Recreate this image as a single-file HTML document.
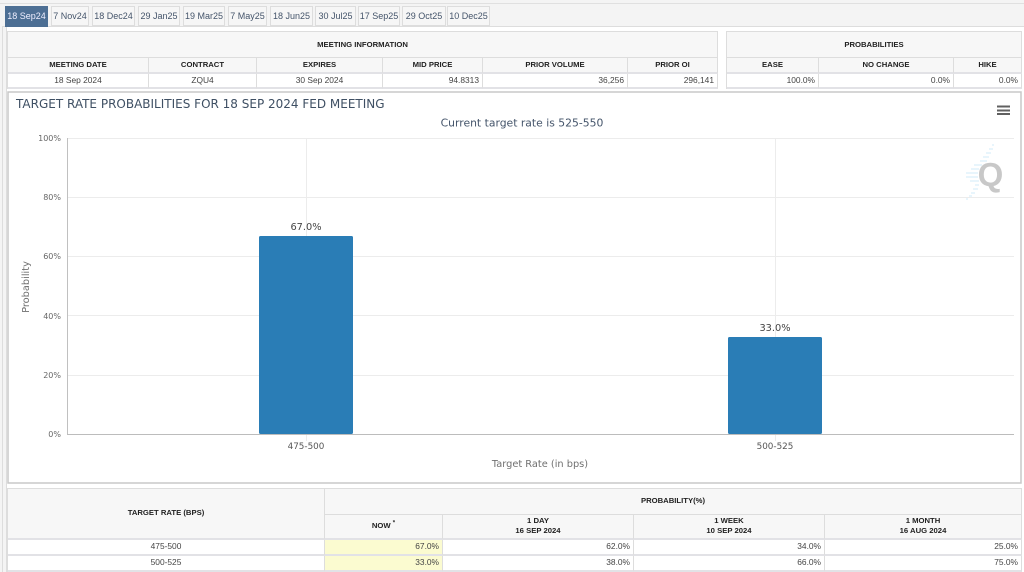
<!DOCTYPE html>
<html><head><meta charset="utf-8">
<style>
html,body{margin:0;padding:0}
body{width:1024px;height:572px;position:relative;overflow:hidden;background:#f4f4f4;font-family:"Liberation Sans",Arial,sans-serif;color:#333}
.a{position:absolute;box-sizing:border-box}
.tab{position:absolute;top:6px;height:20px;background:#f6f6f6;border:1px solid #ddd;color:#44546a;font-size:9px;line-height:19px;text-align:center;box-sizing:border-box;white-space:nowrap;overflow:hidden}
.tab.on{background:#4d6f94;border-color:#4d6f94;color:#eef;height:21px}
.t{position:absolute;box-sizing:border-box;font-size:8.400px;white-space:nowrap;overflow:hidden;text-align:center;color:#333}
.h{font-weight:bold;background:#f7f7f7;color:#222;border-right:1px solid #ddd;border-bottom:2px solid #e2e2e6;font-size:7.700px}
.d{background:#fff;border-right:1px solid #ddd;border-bottom:2px solid #e2e2e6;color:#444}
.r{text-align:right;padding-right:3px}
svg text{font-family:"DejaVu Sans",sans-serif}
</style></head><body>
<div class="a" style="left:0;top:3px;width:1024px;height:1px;background:#e0e0e0"></div>
<div class="a" style="left:2px;top:26px;width:1022px;height:546px;background:#fff;border-left:1px solid #ddd;border-top:1px solid #ddd"></div>
<div class="a" style="left:0;top:26px;width:2px;height:546px;background:#f4f4f4"></div>
<div class="a" style="left:3px;top:27px;width:4px;height:545px;background:#f4f4f4;border-right:1px solid #ddd"></div>

<div class="tab on" style="left:5px;width:43px">18 Sep24</div>
<div class="tab" style="left:51px;width:38px">7 Nov24</div>
<div class="tab" style="left:92px;width:43px">18 Dec24</div>
<div class="tab" style="left:138px;width:42px">29 Jan25</div>
<div class="tab" style="left:183px;width:42px">19 Mar25</div>
<div class="tab" style="left:228px;width:39px">7 May25</div>
<div class="tab" style="left:270px;width:43px">18 Jun25</div>
<div class="tab" style="left:315px;width:41px">30 Jul25</div>
<div class="tab" style="left:358px;width:42px">17 Sep25</div>
<div class="tab" style="left:402px;width:44px">29 Oct25</div>
<div class="tab" style="left:447px;width:43px">10 Dec25</div>

<!-- meeting info -->
<div class="a" style="left:7px;top:31px;width:711px;height:58px;border:1px solid #ddd;border-bottom:0"></div>
<div class="t h" style="left:8px;top:32px;width:710px;height:26px;line-height:25px;border-bottom:1px solid #ddd">MEETING INFORMATION</div>
<div class="t h" style="left:8px;top:58px;width:141px;height:16px;line-height:14px">MEETING DATE</div>
<div class="t h" style="left:149px;top:58px;width:108px;height:16px;line-height:14px">CONTRACT</div>
<div class="t h" style="left:257px;top:58px;width:126px;height:16px;line-height:14px">EXPIRES</div>
<div class="t h" style="left:383px;top:58px;width:100px;height:16px;line-height:14px">MID PRICE</div>
<div class="t h" style="left:483px;top:58px;width:145px;height:16px;line-height:14px">PRIOR VOLUME</div>
<div class="t h" style="left:628px;top:58px;width:90px;height:16px;line-height:14px">PRIOR OI</div>
<div class="t d" style="left:8px;top:74px;width:141px;height:15px;line-height:13px">18 Sep 2024</div>
<div class="t d" style="left:149px;top:74px;width:108px;height:15px;line-height:13px">ZQU4</div>
<div class="t d" style="left:257px;top:74px;width:126px;height:15px;line-height:13px">30 Sep 2024</div>
<div class="t d r" style="left:383px;top:74px;width:100px;height:15px;line-height:13px">94.8313</div>
<div class="t d r" style="left:483px;top:74px;width:145px;height:15px;line-height:13px">36,256</div>
<div class="t d r" style="left:628px;top:74px;width:90px;height:15px;line-height:13px">296,141</div>

<!-- probabilities -->
<div class="a" style="left:726px;top:31px;width:296px;height:58px;border:1px solid #ddd;border-bottom:0"></div>
<div class="t h" style="left:727px;top:32px;width:295px;height:26px;line-height:25px;border-bottom:1px solid #ddd">PROBABILITIES</div>
<div class="t h" style="left:727px;top:58px;width:92px;height:16px;line-height:14px">EASE</div>
<div class="t h" style="left:819px;top:58px;width:135px;height:16px;line-height:14px">NO CHANGE</div>
<div class="t h" style="left:954px;top:58px;width:68px;height:16px;line-height:14px">HIKE</div>
<div class="t d r" style="left:727px;top:74px;width:92px;height:15px;line-height:13px">100.0%</div>
<div class="t d r" style="left:819px;top:74px;width:135px;height:15px;line-height:13px">0.0%</div>
<div class="t d r" style="left:954px;top:74px;width:68px;height:15px;line-height:13px">0.0%</div>

<!-- chart -->
<svg class="a" style="left:7px;top:91px" width="1015" height="393" viewBox="7 91 1015 393">
<rect x="8" y="92" width="1013" height="391" fill="#fff" stroke="#c8c8c8" stroke-width="1.5"/>
<g stroke="#ececec" stroke-width="1">
<path d="M67 138.500H1014M67 197.500H1014M67 256.500H1014M67 315.500H1014M67 375.500H1014"/>
<path d="M306.500 138V441M775.500 138V441"/>
</g>
<path d="M67.500 138V434" stroke="#c0c0c0" fill="none"/>
<path d="M67 434.500H1014" stroke="#bcbcbc" fill="none"/>
<rect x="259" y="236" width="94" height="198" rx="1.500" fill="#2a7db6"/>
<rect x="728" y="337" width="94" height="97" rx="1.500" fill="#2a7db6"/>
<text x="16" y="108" font-size="12" fill="#3e4f63">TARGET RATE PROBABILITIES FOR 18 SEP 2024 FED MEETING</text>
<text x="522" y="126.500" font-size="10.800" fill="#44546a" text-anchor="middle">Current target rate is 525-550</text>
<g font-size="8" fill="#666" text-anchor="end">
<text x="61" y="141">100%</text><text x="61" y="200">80%</text><text x="61" y="259">60%</text><text x="61" y="319">40%</text><text x="61" y="378">20%</text><text x="61" y="437">0%</text>
</g>
<text x="306" y="230" font-size="9.800" fill="#444" text-anchor="middle">67.0%</text>
<text x="775" y="331" font-size="9.800" fill="#444" text-anchor="middle">33.0%</text>
<text x="306" y="449" font-size="8.800" fill="#555" text-anchor="middle">475-500</text>
<text x="775" y="449" font-size="8.800" fill="#555" text-anchor="middle">500-525</text>
<text x="540" y="467" font-size="9.800" fill="#707070" text-anchor="middle">Target Rate (in bps)</text>
<text transform="translate(29 287) rotate(-90)" font-size="9.800" fill="#707070" text-anchor="middle">Probability</text>
<path d="M997 106.500H1010M997 110.500H1010M997 114H1010" stroke="#606060" stroke-width="2" fill="none"/>
<path d="M992 145h2M989 149h4M986 153h5M983 157h6M980 161h7M974 165h8M971 169h8M966 173h12M966 177h12M970 181h9M975 185h4M973 189h5M971 193h4M969 196h3M966 199h2" stroke="#d9effa" stroke-width="1.300" fill="none"/>
<text x="990.500" y="186" font-size="33" font-weight="bold" fill="#c8c8c8" text-anchor="middle" style="font-family:'Liberation Sans',sans-serif">Q</text>
</svg>

<!-- bottom table -->
<div class="a" style="left:7px;top:488px;width:1015px;height:84px;border:1px solid #ddd;border-bottom:0"></div>
<div class="t h" style="left:8px;top:489px;width:317px;height:51px;line-height:48px">TARGET RATE (BPS)</div>
<div class="t h" style="left:325px;top:489px;width:697px;height:26px;line-height:23px;border-bottom:1px solid #ddd">PROBABILITY(%)</div>
<div class="t h" style="left:325px;top:515px;width:118px;height:25px;line-height:22px">NOW <sup style="font-size:6px;line-height:0">*</sup></div>
<div class="t h" style="left:443px;top:515px;width:191px;height:25px;line-height:10px;white-space:normal;padding-top:1px">1 DAY<br>16 SEP 2024</div>
<div class="t h" style="left:634px;top:515px;width:191px;height:25px;line-height:10px;white-space:normal;padding-top:1px">1 WEEK<br>10 SEP 2024</div>
<div class="t h" style="left:825px;top:515px;width:197px;height:25px;line-height:10px;white-space:normal;padding-top:1px">1 MONTH<br>16 AUG 2024</div>

<div class="t d" style="left:8px;top:540px;width:317px;height:16px;line-height:13px">475-500</div>
<div class="t d r" style="left:325px;top:540px;width:118px;height:16px;line-height:13px;background:#fbfbd0">67.0%</div>
<div class="t d r" style="left:443px;top:540px;width:191px;height:16px;line-height:13px">62.0%</div>
<div class="t d r" style="left:634px;top:540px;width:191px;height:16px;line-height:13px">34.0%</div>
<div class="t d r" style="left:825px;top:540px;width:197px;height:16px;line-height:13px">25.0%</div>
<div class="t d" style="left:8px;top:556px;width:317px;height:16px;line-height:13px">500-525</div>
<div class="t d r" style="left:325px;top:556px;width:118px;height:16px;line-height:13px;background:#fbfbd0">33.0%</div>
<div class="t d r" style="left:443px;top:556px;width:191px;height:16px;line-height:13px">38.0%</div>
<div class="t d r" style="left:634px;top:556px;width:191px;height:16px;line-height:13px">66.0%</div>
<div class="t d r" style="left:825px;top:556px;width:197px;height:16px;line-height:13px">75.0%</div>
</body></html>
